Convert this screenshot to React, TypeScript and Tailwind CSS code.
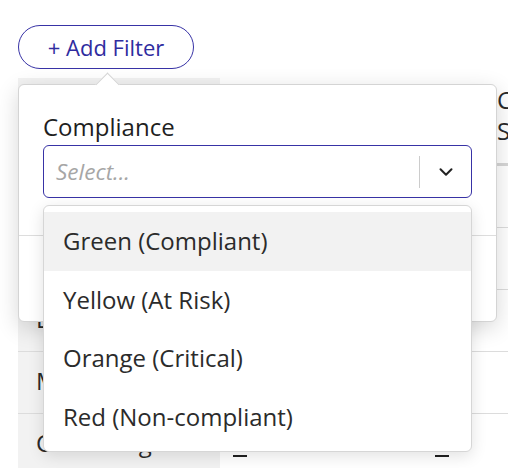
import { ChevronDown } from "lucide-react";

const options = ["Green (Compliant)", "Yellow (At Risk)", "Orange (Critical)", "Red (Non-compliant)"];

const rows = [
  { name: "Data Access", last: false },
  { name: "Data Retention", last: false },
  { name: "Data Privacy", last: false },
  { name: "Monitoring", last: false },
  { name: "Governing", last: true },
];

const App = () => {
  return (
    <div className="relative w-[508px] h-[468px] overflow-hidden bg-white font-['Open_Sans',sans-serif] text-[#222]">
      <div className="pl-[18px] pt-[25px]">
        {/* Filter trigger + popover */}
        <div className="relative">
          <button className="w-[176px] h-[44px] rounded-full border border-[#3833a6] text-[22px] text-[#2f2c9f] bg-white leading-none">
            + Add Filter
          </button>

          <div className="absolute left-0 top-[59px] z-20 w-[479px] h-[238px] rounded-[6px] border border-[#d4d4d4] bg-white shadow-[0_6px_22px_rgba(0,0,0,0.16)]">
            {/* arrow */}
            <div className="absolute -top-[9px] left-[80px] w-[17px] h-[17px] rotate-45 border-l border-t border-[#d4d4d4] bg-white" />

            <div className="px-[24px] pt-[26px]">
              <div className="text-[24px] leading-[32px] text-[#1f1f1f]">Compliance</div>
              <div className="relative mt-[2px]">
                <div className="flex items-center h-[53px] rounded-[6px] border border-[#3833a6] bg-white">
                  <span className="flex-1 pl-[12px] text-[22.5px] italic text-[#a6a6a6]">Select...</span>
                  <span className="w-px h-[32px] bg-[#cccccc]" />
                  <span className="flex w-[51px] justify-center text-[#222]">
                    <ChevronDown size={22} strokeWidth={2.2} />
                  </span>
                </div>

                {/* dropdown menu */}
                <div className="absolute left-0 top-[60px] w-full h-[247px] rounded-[6px] border border-[#d6d6d6] bg-white pt-[6px] shadow-[0_4px_16px_rgba(0,0,0,0.12)]">
                  {options.map((o, i) => (
                    <div
                      key={o}
                      className={`flex items-center h-[58.5px] px-[19px] text-[24px] text-[#2b2b2b] ${i === 0 ? "bg-[#f2f2f2]" : ""}`}
                    >
                      {o}
                    </div>
                  ))}
                </div>
              </div>
            </div>
            <div className="mt-[37px] border-t border-[#dddddd]" />
          </div>
        </div>

        {/* Table behind */}
        <div className="mt-[9px] w-[700px] text-[24px] text-[#2a2a2a]">
          <div className="flex h-[88px] border-b-[3px] border-[#d6d6d6]">
            <div className="w-[202px] bg-[#f2f2f2]" />
            <div className="w-[200px]" />
            <div className="w-[62px]" />
            <div className="pl-[15px] pt-[6px] leading-[31px]">
              Compliance
              <br />
              Status
            </div>
          </div>
          {rows.map((r) => (
            <div key={r.name} className="flex h-[62px] border-b border-[#dcdcdc]">
              <div className="w-[202px] bg-[#f2f2f2] pl-[18px] pt-[13px] leading-[32px] whitespace-nowrap">{r.name}</div>
              <div className="w-[200px] pl-[13px]">
                {r.last && <div className="mt-[41px] w-[14px] h-[2px] bg-[#1f1f1f]" />}
              </div>
              <div className="w-[62px] pl-[15px]">
                {r.last && <div className="mt-[41px] w-[14px] h-[2px] bg-[#1f1f1f]" />}
              </div>
              <div className="flex-1" />
            </div>
          ))}
        </div>
      </div>
    </div>
  );
};

export default App;
